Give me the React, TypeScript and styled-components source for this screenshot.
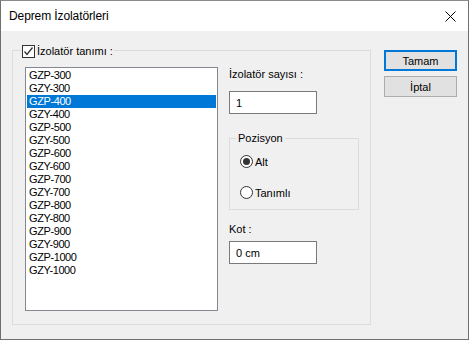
import React from "react";
import styled, { createGlobalStyle } from "styled-components";

const Global = createGlobalStyle`
  html, body { margin: 0; padding: 0; background: #ffffff; }
  body { font-family: "Liberation Sans", Arial, sans-serif; font-size: 11px; color: #000; }
  * { box-sizing: border-box; }
`;

const Window = styled.div`
  width: 469px;
  height: 340px;
  border: 1px solid #6f6f6f;
  border-top-color: #8a8a8a;
  display: flex;
  flex-direction: column;
  background: #f0f0f0;
  overflow: hidden;
`;

const TitleBar = styled.div`
  height: 30px;
  background: #ffffff;
  display: flex;
  align-items: center;
  justify-content: space-between;
  padding: 0 8px 0 8px;
  flex: none;
`;

const Title = styled.span`
  font-size: 12px;
  color: #000;
  letter-spacing: -0.1px;
`;

const CloseButton = styled.div`
  width: 30px;
  height: 30px;
  display: flex;
  align-items: center;
  justify-content: center;
  margin-right: -5px;
`;

const Body = styled.div`
  flex: 1;
  display: flex;
  align-items: flex-start;
  padding: 19px 0 0 11px;
`;

const Group = styled.div`
  position: relative;
  width: 359px;
  height: 275px;
  border: 1px solid #dcdcdc;
  display: flex;
  align-items: flex-start;
  padding: 16px 0 0 12px;
  gap: 11px;
`;

const GroupLegend = styled.label`
  position: absolute;
  top: -7px;
  left: 8px;
  display: flex;
  align-items: center;
  gap: 2px;
  padding: 0 1px;
  background: #f0f0f0;
  height: 14px;
`;

const CheckBox = styled.span`
  width: 13px;
  height: 13px;
  border: 1px solid #333;
  background: #fff;
  display: flex;
  align-items: center;
  justify-content: center;
`;

const ListBox = styled.div`
  width: 193px;
  height: 244px;
  border: 1px solid #828790;
  background: #fff;
  padding: 1px;
  display: flex;
  flex-direction: column;
`;

const ListItem = styled.div<{ $selected?: boolean }>`
  height: 13px;
  line-height: 13px;
  padding-left: 2px;
  letter-spacing: -0.4px;
  background: ${(p) => (p.$selected ? "#0078d7" : "transparent")};
  color: ${(p) => (p.$selected ? "#fff" : "#000")};
  white-space: nowrap;
`;

const RightColumn = styled.div`
  display: flex;
  flex-direction: column;
  width: 130px;
`;

const FieldLabel = styled.div<{ $gap: number }>`
  height: 15px;
  line-height: 15px;
  margin-bottom: ${(p) => p.$gap}px;
`;

const TextBox = styled.div`
  width: 88px;
  height: 23px;
  border: 1px solid #7a7a7a;
  background: #fff;
  display: flex;
  align-items: center;
  padding-left: 6px;
`;

const SubGroup = styled.div`
  position: relative;
  margin-top: 24px;
  width: 130px;
  height: 72px;
  border: 1px solid #dcdcdc;
  display: flex;
  flex-direction: column;
  padding: 16px 0 0 10px;
  gap: 18px;
  margin-bottom: 12px;
`;

const SubLegend = styled.span`
  position: absolute;
  top: -8px;
  left: 6px;
  padding: 0 2px;
  background: #f0f0f0;
  line-height: 15px;
`;

const RadioRow = styled.div`
  display: flex;
  align-items: center;
  gap: 2px;
  height: 13px;
`;

const RadioCircle = styled.span<{ $checked?: boolean }>`
  width: 13px;
  height: 13px;
  border-radius: 50%;
  border: 1px solid #333;
  background: #fff;
  display: flex;
  align-items: center;
  justify-content: center;
  &::after {
    content: "";
    width: 7px;
    height: 7px;
    border-radius: 50%;
    background: ${(p) => (p.$checked ? "#333" : "transparent")};
  }
`;

const ButtonColumn = styled.div`
  display: flex;
  flex-direction: column;
  gap: 5px;
  margin-left: 13px;
`;

const Button = styled.div<{ $default?: boolean }>`
  width: 73px;
  height: 21px;
  background: #e1e1e1;
  border: ${(p) => (p.$default ? "2px solid #0078d7" : "1px solid #adadad")};
  display: flex;
  align-items: center;
  justify-content: center;
  font-size: 11px;
`;

const items = [
  "GZP-300", "GZY-300", "GZP-400", "GZY-400", "GZP-500", "GZY-500",
  "GZP-600", "GZY-600", "GZP-700", "GZY-700", "GZP-800", "GZY-800",
  "GZP-900", "GZY-900", "GZP-1000", "GZY-1000",
];

export default function App() {
  return (
    <>
      <Global />
      <Window>
        <TitleBar>
          <Title>Deprem İzolatörleri</Title>
          <CloseButton>
            <svg width="11" height="11" viewBox="0 0 11 11">
              <path d="M0.5 0.5 L10.5 10.5 M10.5 0.5 L0.5 10.5" stroke="#000" strokeWidth="1" />
            </svg>
          </CloseButton>
        </TitleBar>
        <Body>
          <Group>
            <GroupLegend>
              <CheckBox>
                <svg width="11" height="11" viewBox="0 0 11 11">
                  <path d="M1.5 5.5 L4 8.5 L9.5 1.5" stroke="#333" strokeWidth="1.3" fill="none" />
                </svg>
              </CheckBox>
              İzolatör tanımı :
            </GroupLegend>
            <ListBox>
              {items.map((it, i) => (
                <ListItem key={i} $selected={i === 2}>
                  {it}
                </ListItem>
              ))}
            </ListBox>
            <RightColumn>
              <FieldLabel $gap={9}>İzolatör sayısı :</FieldLabel>
              <TextBox>1</TextBox>
              <SubGroup>
                <SubLegend>Pozisyon</SubLegend>
                <RadioRow>
                  <RadioCircle $checked />
                  Alt
                </RadioRow>
                <RadioRow>
                  <RadioCircle />
                  Tanımlı
                </RadioRow>
              </SubGroup>
              <FieldLabel $gap={4}>Kot :</FieldLabel>
              <TextBox>0 cm</TextBox>
            </RightColumn>
          </Group>
          <ButtonColumn>
            <Button $default>Tamam</Button>
            <Button>İptal</Button>
          </ButtonColumn>
        </Body>
      </Window>
    </>
  );
}
